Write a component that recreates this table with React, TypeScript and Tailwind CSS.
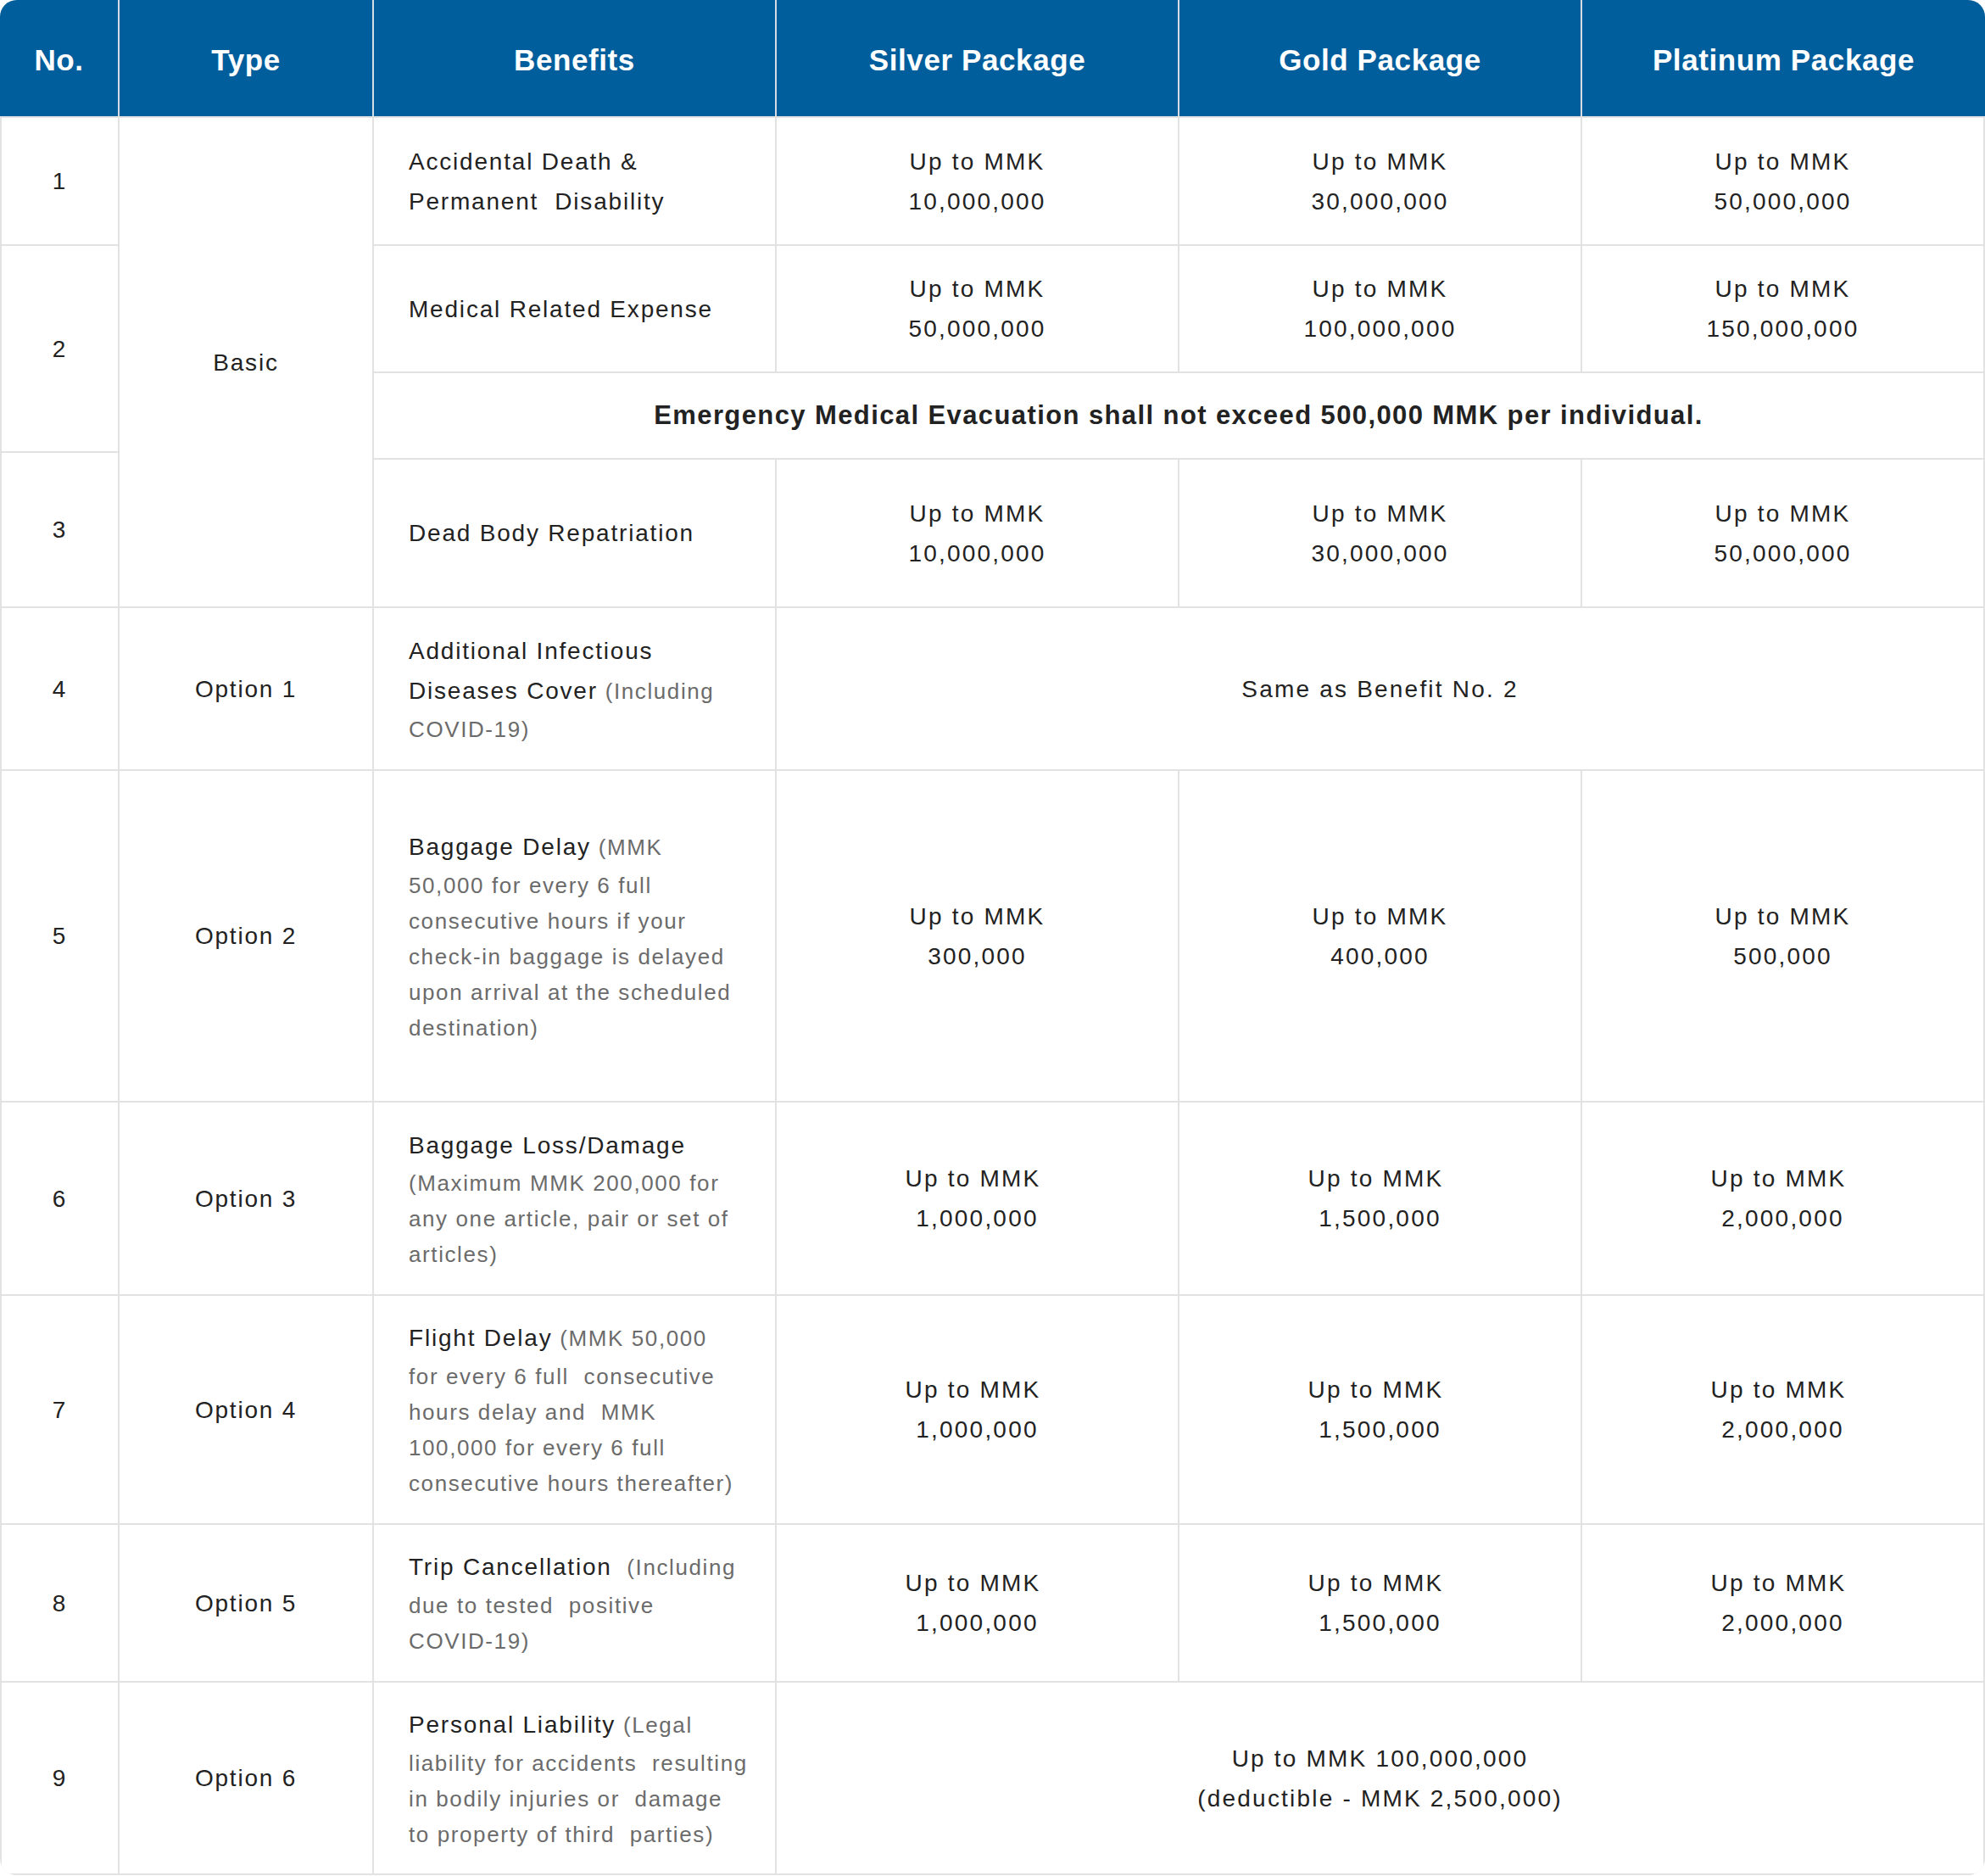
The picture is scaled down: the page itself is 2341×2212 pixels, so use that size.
type Row = {
  no: string;
  type: string;
  title: string;
  note?: string;
  values?: string[];
  merged?: string;
  h: string;
};

const headers = ["No.", "Type", "Benefits", "Silver Package", "Gold Package", "Platinum Package"];
const headWidths = ["w-[139px]", "w-[298px]", "w-[473px]", "w-[473px]", "w-[473px]", "w-[475px]"];

const basic = [
  { title: "Accidental Death &\nPermanent\u00a0 Disability", values: ["Up to MMK\n10,000,000", "Up to MMK\n30,000,000", "Up to MMK\n50,000,000"] },
  { title: "Medical Related Expense", values: ["Up to MMK\n50,000,000", "Up to MMK\n100,000,000", "Up to MMK\n150,000,000"] },
  { title: "Dead Body Repatriation", values: ["Up to MMK\n10,000,000", "Up to MMK\n30,000,000", "Up to MMK\n50,000,000"] },
];

const small = ["Up to MMK \n1,000,000", "Up to MMK \n1,500,000", "Up to MMK \n2,000,000"];

const options: Row[] = [
  {
    no: "4",
    type: "Option 1",
    title: "Additional Infectious\nDiseases Cover",
    note: " (Including\nCOVID-19)",
    merged: "Same as Benefit No. 2",
    h: "h-[190px]",
  },
  {
    no: "5",
    type: "Option 2",
    title: "Baggage Delay",
    note: " (MMK\n50,000 for every 6 full\nconsecutive hours if your\ncheck-in baggage is delayed\nupon arrival at the scheduled\ndestination)",
    values: ["Up to MMK\n300,000", "Up to MMK\n400,000", "Up to MMK\n500,000"],
    h: "h-[389px]",
  },
  {
    no: "6",
    type: "Option 3",
    title: "Baggage Loss/Damage",
    note: "\n(Maximum MMK 200,000 for\nany one article, pair or set of\narticles)",
    values: small,
    h: "h-[226px]",
  },
  {
    no: "7",
    type: "Option 4",
    title: "Flight Delay",
    note: " (MMK 50,000\nfor every 6 full  consecutive\nhours delay and  MMK\n100,000 for every 6 full\nconsecutive hours thereafter)",
    values: small,
    h: "h-[268px]",
  },
  {
    no: "8",
    type: "Option 5",
    title: "Trip Cancellation",
    note: "  (Including\ndue to tested  positive\nCOVID-19)",
    values: small,
    h: "h-[184px]",
  },
  {
    no: "9",
    type: "Option 6",
    title: "Personal Liability",
    note: " (Legal\nliability for accidents  resulting\nin bodily injuries or  damage\nto property of third  parties)",
    merged: "Up to MMK 100,000,000\n(deductible - MMK 2,500,000)",
    h: "h-[225px]",
  },
];

const text = "text-[28px] leading-[47px] tracking-[1.8px] text-[#222]";
const valueText = "text-[28px] leading-[47px] tracking-[2.2px] text-[#222]";

// split the title + note into lines, each line keeps its black and grey part
function toLines(title: string, note?: string) {
  const t = title.split("\n");
  const n = note ? note.split("\n") : [];
  const lines = t.map((b, i) => ({ black: b, grey: i === t.length - 1 && n.length ? n[0] : "" }));
  n.slice(1).forEach((g) => lines.push({ black: "", grey: g }));
  return lines.filter((l) => l.black || l.grey);
}

function Benefit({ title, note }: { title: string; note?: string }) {
  return (
    <div className="w-[473px] bg-white flex items-center pl-[41px]">
      <div className="whitespace-pre">
        {toLines(title, note).map((l, i) => (
          <div
            key={i}
            className={l.black ? "text-[28px] leading-[47px]" : "text-[26px] leading-[42px]"}
          >
            {l.black && <span className="tracking-[1.8px] text-[#222]">{l.black}</span>}
            {l.grey && (
              <span className="text-[26px] tracking-[1.6px] text-[#6b6b6b]">{l.grey}</span>
            )}
          </div>
        ))}
      </div>
    </div>
  );
}

function Value({ v, wide }: { v: string; wide?: boolean }) {
  return (
    <div className={`${wide ? "flex-1" : "w-[473px]"} bg-white flex items-center justify-center`}>
      <div className={`whitespace-pre text-center ${valueText}`}>{v}</div>
    </div>
  );
}

function Center({ v, w }: { v: string; w: string }) {
  return (
    <div className={`${w} bg-white flex items-center justify-center ${text}`}>{v}</div>
  );
}

export default function App() {
  return (
    <div className="min-h-screen bg-white">
      <div className="w-[2341px] rounded-[20px] overflow-hidden bg-[#e2e2e2] font-['Liberation_Sans',Arial,sans-serif]">
        <div className="flex gap-[2px] h-[137px] bg-[#d5dce4]">
          {headers.map((h, i) => (
            <div
              key={h}
              className={`${headWidths[i]} bg-[#015e9c] flex items-center justify-center pt-[5px] text-white text-[35px] font-bold tracking-[0.6px]`}
            >
              {h}
            </div>
          ))}
        </div>

        <div className="flex flex-col gap-[2px] p-[2px]">
          <div className="flex gap-[2px]">
            <div className="w-[137px] flex flex-col gap-[2px]">
              <Center v="1" w="h-[149px]" />
              <Center v="2" w="h-[242px]" />
              <Center v="3" w="h-[181px]" />
            </div>
            <Center v="Basic" w="w-[298px]" />
            <div className="flex-1 flex flex-col gap-[2px]">
              <div className="flex gap-[2px] h-[149px]">
                <Benefit title={basic[0].title} />
                {basic[0].values.map((v, i) => (
                  <Value key={i} v={v} />
                ))}
              </div>
              <div className="flex gap-[2px] h-[148px]">
                <Benefit title={basic[1].title} />
                {basic[1].values.map((v, i) => (
                  <Value key={i} v={v} />
                ))}
              </div>
              <div className="h-[100px] bg-white flex items-center justify-center text-[31px] font-bold tracking-[1.4px] text-[#222]">
                Emergency Medical Evacuation shall not exceed 500,000 MMK per individual.
              </div>
              <div className="flex gap-[2px] h-[173px]">
                <Benefit title={basic[2].title} />
                {basic[2].values.map((v, i) => (
                  <Value key={i} v={v} />
                ))}
              </div>
            </div>
          </div>

          {options.map((r) => (
            <div key={r.no} className={`flex gap-[2px] ${r.h}`}>
              <Center v={r.no} w="w-[137px]" />
              <Center v={r.type} w="w-[298px]" />
              <Benefit title={r.title} note={r.note} />
              {r.merged ? (
                <Value v={r.merged} wide />
              ) : (
                r.values?.map((v, i) => <Value key={i} v={v} />)
              )}
            </div>
          ))}
        </div>
      </div>
    </div>
  );
}
